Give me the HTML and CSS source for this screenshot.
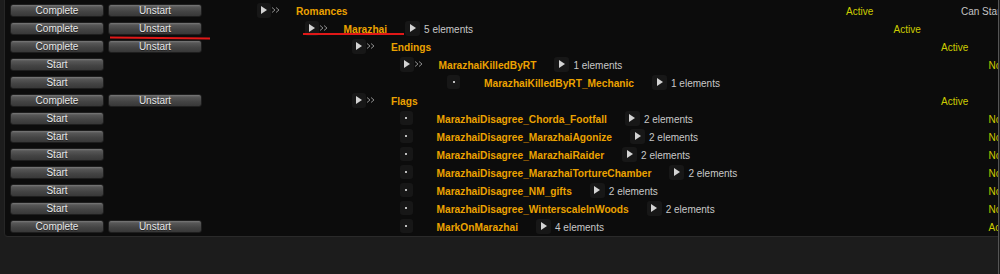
FILE: index.html
```html
<!DOCTYPE html>
<html lang="en">
<head>
  <meta charset="UTF-8">
  <title>Quest Flags</title>
  <link rel="stylesheet" href="styles.css">
</head>
<body>
  <div class="screen">
    <div class="panel">
      <!-- Romances -->
      <div class="row">
        <div class="actions"><button class="btn">Complete</button><button class="btn">Unstart</button></div>
        <div class="tree l0">
          <div class="toggle"><span class="box"><svg width="6" height="8" viewBox="0 0 6 8"><polygon points="0,0 6,4 0,8" fill="#d4d4d4"/></svg></span><svg class="chev" width="8" height="6" viewBox="0 0 8 6"><polyline points="0,0.5 3,3 0,5.5" fill="none" stroke="#8a8a8a" stroke-width="1"/><polyline points="4,0.5 7,3 4,5.5" fill="none" stroke="#8a8a8a" stroke-width="1"/></svg></div>
          <div class="name-cell"><span class="name">Romances</span></div>
          <div class="status">Active</div>
          <div class="extra">Can Start</div>
        </div>
      </div>
      <!-- Marazhai -->
      <div class="row">
        <div class="actions"><button class="btn">Complete</button><button class="btn">Unstart</button></div>
        <div class="tree l1">
          <div class="toggle"><span class="box"><svg width="6" height="8" viewBox="0 0 6 8"><polygon points="0,0 6,4 0,8" fill="#d4d4d4"/></svg></span><svg class="chev" width="8" height="6" viewBox="0 0 8 6"><polyline points="0,0.5 3,3 0,5.5" fill="none" stroke="#8a8a8a" stroke-width="1"/><polyline points="4,0.5 7,3 4,5.5" fill="none" stroke="#8a8a8a" stroke-width="1"/></svg></div>
          <div class="name-cell"><span class="name">Marazhai</span><span class="count"><span class="box"><svg width="6" height="8" viewBox="0 0 6 8"><polygon points="0,0 6,4 0,8" fill="#d4d4d4"/></svg></span>5 elements</span></div>
          <div class="status">Active</div>
          <div class="extra">Can Start</div>
        </div>
      </div>
      <!-- Endings -->
      <div class="row">
        <div class="actions"><button class="btn">Complete</button><button class="btn">Unstart</button></div>
        <div class="tree l2">
          <div class="toggle"><span class="box"><svg width="6" height="8" viewBox="0 0 6 8"><polygon points="0,0 6,4 0,8" fill="#d4d4d4"/></svg></span><svg class="chev" width="8" height="6" viewBox="0 0 8 6"><polyline points="0,0.5 3,3 0,5.5" fill="none" stroke="#8a8a8a" stroke-width="1"/><polyline points="4,0.5 7,3 4,5.5" fill="none" stroke="#8a8a8a" stroke-width="1"/></svg></div>
          <div class="name-cell"><span class="name">Endings</span></div>
          <div class="status">Active</div>
          <div class="extra">Can Start</div>
        </div>
      </div>
      <!-- MarazhaiKilledByRT -->
      <div class="row">
        <div class="actions"><button class="btn">Start</button></div>
        <div class="tree l3">
          <div class="toggle"><span class="box"><svg width="6" height="8" viewBox="0 0 6 8"><polygon points="0,0 6,4 0,8" fill="#d4d4d4"/></svg></span><svg class="chev" width="8" height="6" viewBox="0 0 8 6"><polyline points="0,0.5 3,3 0,5.5" fill="none" stroke="#8a8a8a" stroke-width="1"/><polyline points="4,0.5 7,3 4,5.5" fill="none" stroke="#8a8a8a" stroke-width="1"/></svg></div>
          <div class="name-cell"><span class="name">MarazhaiKilledByRT</span><span class="count"><span class="box"><svg width="6" height="8" viewBox="0 0 6 8"><polygon points="0,0 6,4 0,8" fill="#d4d4d4"/></svg></span>1 elements</span></div>
          <div class="status">Not Started</div>
        </div>
      </div>
      <div class="row">
        <div class="actions"><button class="btn">Start</button></div>
        <div class="tree l4 leaf">
          <div class="toggle"><span class="box bullet"><i class="dot"></i></span></div>
          <div class="name-cell"><span class="name">MarazhaiKilledByRT_Mechanic</span><span class="count"><span class="box"><svg width="6" height="8" viewBox="0 0 6 8"><polygon points="0,0 6,4 0,8" fill="#d4d4d4"/></svg></span>1 elements</span></div>
          <div class="status">Not Started</div>
        </div>
      </div>
      <!-- Flags -->
      <div class="row">
        <div class="actions"><button class="btn">Complete</button><button class="btn">Unstart</button></div>
        <div class="tree l2">
          <div class="toggle"><span class="box"><svg width="6" height="8" viewBox="0 0 6 8"><polygon points="0,0 6,4 0,8" fill="#d4d4d4"/></svg></span><svg class="chev" width="8" height="6" viewBox="0 0 8 6"><polyline points="0,0.5 3,3 0,5.5" fill="none" stroke="#8a8a8a" stroke-width="1"/><polyline points="4,0.5 7,3 4,5.5" fill="none" stroke="#8a8a8a" stroke-width="1"/></svg></div>
          <div class="name-cell"><span class="name">Flags</span></div>
          <div class="status">Active</div>
        </div>
      </div>
      <div class="row">
        <div class="actions"><button class="btn">Start</button></div>
        <div class="tree l3 leaf">
          <div class="toggle"><span class="box bullet"><i class="dot"></i></span></div>
          <div class="name-cell"><span class="name">MarazhaiDisagree_Chorda_Footfall</span><span class="count"><span class="box"><svg width="6" height="8" viewBox="0 0 6 8"><polygon points="0,0 6,4 0,8" fill="#d4d4d4"/></svg></span>2 elements</span></div>
          <div class="status">Not Started</div>
        </div>
      </div>
      <div class="row">
        <div class="actions"><button class="btn">Start</button></div>
        <div class="tree l3 leaf">
          <div class="toggle"><span class="box bullet"><i class="dot"></i></span></div>
          <div class="name-cell"><span class="name">MarazhaiDisagree_MarazhaiAgonize</span><span class="count"><span class="box"><svg width="6" height="8" viewBox="0 0 6 8"><polygon points="0,0 6,4 0,8" fill="#d4d4d4"/></svg></span>2 elements</span></div>
          <div class="status">Not Started</div>
        </div>
      </div>
      <div class="row">
        <div class="actions"><button class="btn">Start</button></div>
        <div class="tree l3 leaf">
          <div class="toggle"><span class="box bullet"><i class="dot"></i></span></div>
          <div class="name-cell"><span class="name">MarazhaiDisagree_MarazhaiRaider</span><span class="count"><span class="box"><svg width="6" height="8" viewBox="0 0 6 8"><polygon points="0,0 6,4 0,8" fill="#d4d4d4"/></svg></span>2 elements</span></div>
          <div class="status">Not Started</div>
        </div>
      </div>
      <div class="row">
        <div class="actions"><button class="btn">Start</button></div>
        <div class="tree l3 leaf">
          <div class="toggle"><span class="box bullet"><i class="dot"></i></span></div>
          <div class="name-cell"><span class="name">MarazhaiDisagree_MarazhaiTortureChamber</span><span class="count"><span class="box"><svg width="6" height="8" viewBox="0 0 6 8"><polygon points="0,0 6,4 0,8" fill="#d4d4d4"/></svg></span>2 elements</span></div>
          <div class="status">Not Started</div>
        </div>
      </div>
      <div class="row">
        <div class="actions"><button class="btn">Start</button></div>
        <div class="tree l3 leaf">
          <div class="toggle"><span class="box bullet"><i class="dot"></i></span></div>
          <div class="name-cell"><span class="name">MarazhaiDisagree_NM_gifts</span><span class="count"><span class="box"><svg width="6" height="8" viewBox="0 0 6 8"><polygon points="0,0 6,4 0,8" fill="#d4d4d4"/></svg></span>2 elements</span></div>
          <div class="status">Not Started</div>
        </div>
      </div>
      <div class="row">
        <div class="actions"><button class="btn">Start</button></div>
        <div class="tree l3 leaf">
          <div class="toggle"><span class="box bullet"><i class="dot"></i></span></div>
          <div class="name-cell"><span class="name">MarazhaiDisagree_WinterscaleInWoods</span><span class="count"><span class="box"><svg width="6" height="8" viewBox="0 0 6 8"><polygon points="0,0 6,4 0,8" fill="#d4d4d4"/></svg></span>2 elements</span></div>
          <div class="status">Not Started</div>
        </div>
      </div>
      <div class="row">
        <div class="actions"><button class="btn">Complete</button><button class="btn">Unstart</button></div>
        <div class="tree l3 leaf">
          <div class="toggle"><span class="box bullet"><i class="dot"></i></span></div>
          <div class="name-cell"><span class="name">MarkOnMarazhai</span><span class="count"><span class="box"><svg width="6" height="8" viewBox="0 0 6 8"><polygon points="0,0 6,4 0,8" fill="#d4d4d4"/></svg></span>4 elements</span></div>
          <div class="status">Active</div>
        </div>
      </div>
    </div>
  </div>

  <!-- red annotation strokes drawn over the screenshot -->
  <div class="mark mark-btn"></div>
  <div class="mark mark-node"></div>
</body>
</html>
```

FILE: styles.css
```css
body {
  margin: 0;
  background: #1c1c1c;
  font-family: "Liberation Sans", Arial, sans-serif;
  font-size: 10px;
  height: 274px;
  overflow: hidden;
  position: relative;
}
.screen {
  width: 998px;
  height: 274px;
  border-right: 1px solid #555;
  overflow: hidden;
}
.panel {
  margin-left: 4px;
  width: 994px;
  height: 237px;
  padding-top: 1px;
  box-sizing: border-box;
  background: #0c0c0c;
  border-left: 1px solid #262626;
  border-bottom: 1px solid #2a2a2a;
  border-bottom-left-radius: 4px;
  overflow: hidden;
}
.row {
  display: flex;
  align-items: center;
  height: 18px;
  white-space: nowrap;
}
.actions {
  flex: none;
  width: 252px;
  padding-left: 5px;
  box-sizing: border-box;
  display: flex;
  gap: 4px;
}
.btn {
  width: 94px;
  height: 13px;
  padding: 0;
  padding-top: 1px;
  border: 1px solid #1e1e1e;
  border-radius: 3px;
  background: linear-gradient(#7a7a7a 0, #575757 2px, #444 60%, #383838 100%);
  color: #e8e8e8;
  font-family: "Liberation Sans", Arial, sans-serif;
  font-size: 10px;
  line-height: 10px;
  text-align: center;
  text-shadow: 0 1px 0 #222;
}
.tree {
  display: flex;
  align-items: center;
  flex: none;
}
.l1 { margin-left: 47.5px; }
.l2 { margin-left: 95px; }
.l3 { margin-left: 142.5px; }
.l4 { margin-left: 190px; }
.toggle {
  flex: none;
  width: 39px;
  display: flex;
  align-items: center;
}
.box {
  width: 14px;
  height: 15px;
  border-radius: 3px;
  background: #171717;
  display: flex;
  align-items: center;
  justify-content: center;
  flex: none;
}
.chev {
  margin-left: 1px;
}
.bullet {
  width: 13px;
  height: 14px;
}
.dot {
  width: 2px;
  height: 2px;
  background: #bdbdbd;
}
.name-cell {
  flex: none;
  width: 550px;
  display: flex;
  align-items: center;
  padding-top: 2px;
}
.leaf .name {
  margin-left: -2px;
}
.name {
  font-weight: bold;
  font-size: 10.2px;
  color: #eba200;
}
.count {
  margin-left: 18px;
  display: flex;
  align-items: center;
  color: #c8c8c8;
}
.count .box {
  width: 15px;
  margin-right: 4px;
  margin-top: -2px;
}
.status {
  flex: none;
  width: 115px;
  color: #cccc00;
  padding-top: 2px;
}
.extra {
  color: #c4c4c4;
  padding-top: 2px;
}
.mark {
  position: absolute;
  height: 2px;
  background: #e01818;
}
.mark-btn {
  left: 110px;
  top: 37px;
  width: 100px;
  transform: rotate(0.6deg);
}
.mark-node {
  left: 303px;
  top: 33px;
  width: 101px;
}
```
